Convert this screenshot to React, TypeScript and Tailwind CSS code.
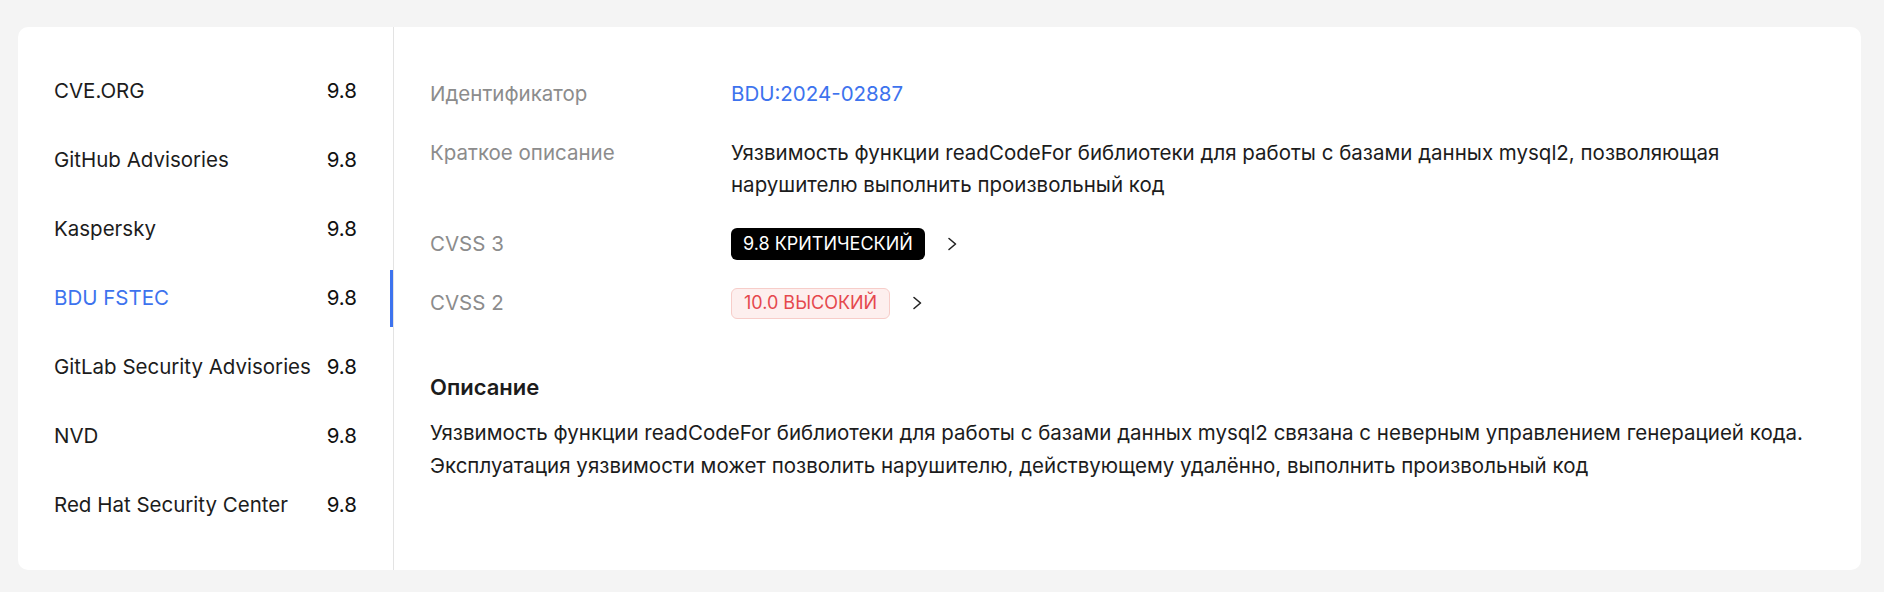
const sources = [
  { name: "CVE.ORG", score: "9.8" },
  { name: "GitHub Advisories", score: "9.8" },
  { name: "Kaspersky", score: "9.8" },
  { name: "BDU FSTEC", score: "9.8", active: true },
  { name: "GitLab Security Advisories", score: "9.8" },
  { name: "NVD", score: "9.8" },
  { name: "Red Hat Security Center", score: "9.8" },
]

function Chevron() {
  return (
    <svg width="11" height="14" viewBox="0 0 11 14" fill="none" className="text-[#222]">
      <path d="M2 1.5L8.5 7L2 12.5" stroke="currentColor" strokeWidth="1.6" strokeLinecap="round" strokeLinejoin="round" />
    </svg>
  )
}

export default function App() {
  return (
    <div className="min-h-screen bg-[#f4f4f4] pl-[18px] pr-[23px] pt-[27px] pb-[22px] font-['Inter','Noto_Sans',sans-serif] text-[20.5px] text-[#1c1c1c]">
      <div className="flex h-[543px] bg-white rounded-[10px] overflow-hidden">
        {/* Sources list */}
        <div className="w-[376px] shrink-0 border-r border-[#e3e3e3] pt-[36px] flex flex-col gap-3">
          {sources.map((s) => (
            <div key={s.name} className="relative flex items-center justify-between h-[57px] px-9">
              <span className={s.active ? "text-[#3d73ee]" : "text-[#1c1c1c]"}>{s.name}</span>
              <span className="text-[#111]">{s.score}</span>
              {s.active && <div className="absolute right-0 top-0 bottom-0 w-[3px] bg-[#3d73ee]" />}
            </div>
          ))}
        </div>

        {/* Details */}
        <div className="flex-1 px-9 pt-[51px]">
          <div className="flex flex-col gap-[27px] leading-[32px]">
            <div className="flex">
              <div className="w-[301px] shrink-0 text-[#8c8c8c]">Идентификатор</div>
              <div className="text-[#3d73ee]">BDU:2024-02887</div>
            </div>
            <div className="flex">
              <div className="w-[301px] shrink-0 text-[#8c8c8c]">Краткое описание</div>
              <div>
                Уязвимость функции readCodeFor библиотеки для работы с базами данных mysql2, позволяющая
                нарушителю выполнить произвольный код
              </div>
            </div>
            <div className="flex items-center">
              <div className="w-[301px] shrink-0 text-[#8c8c8c]">CVSS 3</div>
              <div className="flex items-center gap-[22px]">
                <span className="h-[32px] flex items-center px-3 rounded-[6px] bg-black text-white text-[18px]">
                  9.8 КРИТИЧЕСКИЙ
                </span>
                <Chevron />
              </div>
            </div>
            <div className="flex items-center">
              <div className="w-[301px] shrink-0 text-[#8c8c8c]">CVSS 2</div>
              <div className="flex items-center gap-[22px]">
                <span className="h-[31px] flex items-center px-3 rounded-[6px] bg-[#fdefee] border border-[#f7cdc9] text-[#e5484d] text-[18px]">
                  10.0 ВЫСОКИЙ
                </span>
                <Chevron />
              </div>
            </div>
          </div>

          <h3 className="mt-[54px] text-[22px] leading-[28px] font-semibold text-[#1c1c1c]">Описание</h3>
          <p className="mt-[15px] leading-[33px]">
            Уязвимость функции readCodeFor библиотеки для работы с базами данных mysql2 связана с неверным
            управлением генерацией кода. Эксплуатация уязвимости может позволить нарушителю, действующему
            удалённо, выполнить произвольный код
          </p>
        </div>
      </div>
    </div>
  )
}
